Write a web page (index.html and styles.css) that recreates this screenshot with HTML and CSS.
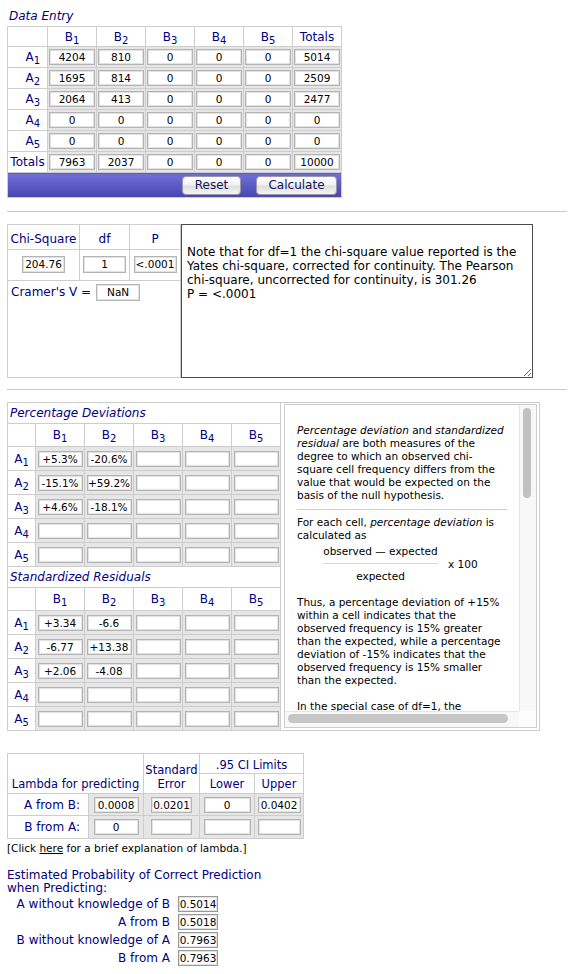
FILE: index.html
```html
<!DOCTYPE html>
<html>
<head>
<meta charset="utf-8">
<title>Chi-Square</title>
<link rel="stylesheet" href="styles.css">
</head>
<body>
<div class="title">Data Entry</div>
<table class="grid data">
  <colgroup><col class="w40"><col class="w49"><col class="w49"><col class="w49"><col class="w49"><col class="w49"><col class="w49"></colgroup>
  <tr class="hrow"><th></th><th>B<sub>1</sub></th><th>B<sub>2</sub></th><th>B<sub>3</sub></th><th>B<sub>4</sub></th><th>B<sub>5</sub></th><th>Totals</th></tr>
  <tr><th class="alab">A<sub>1</sub></th><td><input value="4204"></td><td><input value="810"></td><td><input value="0"></td><td><input value="0"></td><td><input value="0"></td><td><input value="5014"></td></tr>
  <tr><th class="alab">A<sub>2</sub></th><td><input value="1695"></td><td><input value="814"></td><td><input value="0"></td><td><input value="0"></td><td><input value="0"></td><td><input value="2509"></td></tr>
  <tr><th class="alab">A<sub>3</sub></th><td><input value="2064"></td><td><input value="413"></td><td><input value="0"></td><td><input value="0"></td><td><input value="0"></td><td><input value="2477"></td></tr>
  <tr><th class="alab">A<sub>4</sub></th><td><input value="0"></td><td><input value="0"></td><td><input value="0"></td><td><input value="0"></td><td><input value="0"></td><td><input value="0"></td></tr>
  <tr><th class="alab">A<sub>5</sub></th><td><input value="0"></td><td><input value="0"></td><td><input value="0"></td><td><input value="0"></td><td><input value="0"></td><td><input value="0"></td></tr>
  <tr><th class="tlab">Totals</th><td><input value="7963"></td><td><input value="2037"></td><td><input value="0"></td><td><input value="0"></td><td><input value="0"></td><td><input value="10000"></td></tr>
  <tr class="bar"><td colspan="7"><button class="btn reset">Reset</button><button class="btn calc">Calculate</button></td></tr>
</table>

<div class="rule"></div>

<div class="chirow">
  <table class="grid chi">
    <colgroup><col class="c72"><col class="c50"><col class="c51"></colgroup>
    <tr class="chead"><th>Chi-Square</th><th>df</th><th>P</th></tr>
    <tr class="cvals"><th><input class="cin" value="204.76"></th><th><input class="cin" value="1"></th><th><input class="cin" value="&lt;.0001"></th></tr>
    <tr class="cram"><th colspan="3"><div class="cramer"><span>Cramer's V =</span><input class="cin" value="NaN"></div></th></tr>
  </table>
  <textarea class="note">

Note that for df=1 the chi-square value reported is the Yates chi-square, corrected for continuity. The Pearson chi-square, uncorrected for continuity, is 301.26
P = &lt;.0001</textarea>
</div>

<div class="rule rule2"></div>

<div class="pct">
  <table class="grid res">
    <colgroup><col class="w28"><col class="w49"><col class="w49"><col class="w49"><col class="w49"><col class="w49"></colgroup>
    <tr class="cap"><th colspan="6">Percentage Deviations</th></tr>
    <tr class="rh"><th></th><th>B<sub>1</sub></th><th>B<sub>2</sub></th><th>B<sub>3</sub></th><th>B<sub>4</sub></th><th>B<sub>5</sub></th></tr>
    <tr class="rr"><th>A<sub>1</sub></th><td><input value="+5.3%"></td><td><input value="-20.6%"></td><td><input></td><td><input></td><td><input></td></tr>
    <tr class="rr"><th>A<sub>2</sub></th><td><input value="-15.1%"></td><td><input value="+59.2%"></td><td><input></td><td><input></td><td><input></td></tr>
    <tr class="rr"><th>A<sub>3</sub></th><td><input value="+4.6%"></td><td><input value="-18.1%"></td><td><input></td><td><input></td><td><input></td></tr>
    <tr class="rr"><th>A<sub>4</sub></th><td><input></td><td><input></td><td><input></td><td><input></td><td><input></td></tr>
    <tr class="rr"><th>A<sub>5</sub></th><td><input></td><td><input></td><td><input></td><td><input></td><td><input></td></tr>
    <tr class="cap"><th colspan="6">Standardized Residuals</th></tr>
    <tr class="rh"><th></th><th>B<sub>1</sub></th><th>B<sub>2</sub></th><th>B<sub>3</sub></th><th>B<sub>4</sub></th><th>B<sub>5</sub></th></tr>
    <tr class="rr"><th>A<sub>1</sub></th><td><input value="+3.34"></td><td><input value="-6.6"></td><td><input></td><td><input></td><td><input></td></tr>
    <tr class="rr"><th>A<sub>2</sub></th><td><input value="-6.77"></td><td><input value="+13.38"></td><td><input></td><td><input></td><td><input></td></tr>
    <tr class="rr"><th>A<sub>3</sub></th><td><input value="+2.06"></td><td><input value="-4.08"></td><td><input></td><td><input></td><td><input></td></tr>
    <tr class="rr"><th>A<sub>4</sub></th><td><input></td><td><input></td><td><input></td><td><input></td><td><input></td></tr>
    <tr class="rr"><th>A<sub>5</sub></th><td><input></td><td><input></td><td><input></td><td><input></td><td><input></td></tr>
  </table>
  <div class="side">
    <div class="panel">
      <div class="pview">
        <div class="panel-in">
          <p class="first"><i>Percentage deviation</i> and <i>standardized residual</i> are both measures of the degree to which an observed chi-square cell frequency differs from the value that would be expected on the basis of the null hypothesis.</p>
          <hr class="sep">
          <p>For each cell, <i>percentage deviation</i> is calculated as</p>
          <div class="frac">
            <div class="fr"><div class="num">observed — expected</div><div class="den">expected</div></div>
            <div class="x100">x 100</div>
          </div>
          <p class="gap">Thus, a percentage deviation of +15% within a cell indicates that the observed frequency is 15% greater than the expected, while a percentage deviation of -15% indicates that the observed frequency is 15% smaller than the expected.</p>
          <p class="gap">In the special case of df=1, the percentage deviations are calculated from the observed frequencies as adjusted by the Yates correction for continuity.</p>
        </div>
      </div>
      <div class="vbar"><div class="vthumb"></div></div>
      <div class="hbar"><div class="hthumb"></div></div>
      <div class="corner"></div>
    </div>
  </div>
</div>

<table class="grid lam">
  <colgroup><col class="l81"><col class="l55"><col class="l56"><col class="l55"><col class="l49"></colgroup>
  <tr class="lh1"><th colspan="2" rowspan="2" class="lamhead">Lambda for predicting</th><th rowspan="2" class="se">Standard<br>Error</th><th colspan="2" class="ci">.95 CI Limits</th></tr>
  <tr class="lh2"><th>Lower</th><th>Upper</th></tr>
  <tr class="lr1"><th class="rlab">A from B:</th><td><input class="i45" value="0.0008"></td><td><input class="i41" value="0.0201"></td><td><input class="i47" value="0"></td><td><input class="i43" value="0.0402"></td></tr>
  <tr class="lr2"><th class="rlab">B from A:</th><td><input class="i45" value="0"></td><td><input class="i41"></td><td><input class="i47"></td><td><input class="i43"></td></tr>
</table>
<div class="click">[Click <a href="#">here</a> for a brief explanation of lambda.]</div>

<div class="est">Estimated Probability of Correct Prediction<br>when Predicting:</div>
<table class="prob">
  <tr><td class="pl">A without knowledge of B</td><td><input class="pin" value="0.5014"></td></tr>
  <tr><td class="pl">A from B</td><td><input class="pin" value="0.5018"></td></tr>
  <tr><td class="pl">B without knowledge of A</td><td><input class="pin" value="0.7963"></td></tr>
  <tr><td class="pl">B from A</td><td><input class="pin" value="0.7963"></td></tr>
</table>
</body>
</html>
```

FILE: styles.css
```css
* { box-sizing: border-box; }
html, body { margin: 0; padding: 0; background: #fff; }
body {
  padding-left: 7px;
  font-family: "DejaVu Sans", Verdana, sans-serif;
  font-size: 12px;
  line-height: 14px;
  color: #000;
}
sub { font-size: 10px; vertical-align: -3px; line-height: 0; }

.title { font-style: italic; color: #000080; height: 26px; padding: 9px 0 0 2px; }

.grid { border-collapse: collapse; table-layout: fixed; }
.grid th, .grid td {
  border: 1px solid #cdcdcd;
  padding: 0;
  font-weight: normal;
  color: #000080;
  text-align: center;
  vertical-align: middle;
  background: #fff;
}
.grid td { background: #e6e6e6; }

input {
  display: block;
  margin: 0 auto;
  width: 46px;
  height: 16px;
  padding: 0;
  border: 1px solid #b4b4b4;
  box-shadow: inset 0 0 0 1px #e2e2e2;
  background: #fff;
  font-family: "DejaVu Sans", Verdana, sans-serif;
  font-size: 10.5px;
  color: #000;
  text-align: center;
  outline: none;
}

/* data entry */
.data { width: 335px; }
.w40 { width: 40px; }
.w49 { width: 49px; }
.w28 { width: 28px; }
.data .hrow th { height: 20px; }
.data tr th, .data tr td { height: 21px; }
.data .alab { text-align: right; padding-right: 7px; }
.data .tlab { text-align: center; }
.data .bar td {
  height: 25px;
  background: linear-gradient(#7070d8, #4646ae);
  text-align: right;
  padding-right: 4px;
}
.btn {
  height: 19px;
  margin-left: 15px;
  padding: 0;
  font-family: "DejaVu Sans", Verdana, sans-serif;
  font-size: 12px;
  color: #15155e;
  background: linear-gradient(#ffffff, #f2f2f2 45%, #dedede 55%, #f4f4f4);
  border: 1px solid #9898aa;
  border-radius: 4px;
  vertical-align: middle;
}
.reset { width: 59px; }
.calc { width: 81px; }

.rule { width: 560px; height: 0; border-top: 1px solid #c8c8c8; margin: 13px 0 12px; }
.rule2 { margin: 11px 0 12px; }

/* chi square */
.chirow { display: flex; align-items: stretch; height: 154px; }
.chi { width: 173px; height: 154px; }
.c72 { width: 72px; }
.c50 { width: 50px; }
.c51 { width: 51px; }
.chi .chead th { height: 25px; vertical-align: bottom; padding-bottom: 3px; }
.chi .cvals th { height: 31px; padding-bottom: 2px; }
.chi .cram th { vertical-align: top; text-align: left; }
.cramer { display: flex; align-items: center; gap: 5px; height: 22px; padding-left: 3px; }
.cin { width: 43px; height: 17px; margin: 0 auto; }
.cramer .cin { margin: 0; width: 44px; }
.note {
  width: 352px;
  height: 154px;
  margin: 0;
  border: 1px solid #4c4c4c;
  padding: 6px 4px 2px 5px;
  font-family: "DejaVu Sans", Verdana, sans-serif;
  font-size: 12px;
  line-height: 14px;
  color: #000;
  resize: both;
  background: #fff;
}

/* residuals */
.pct { display: flex; height: 329px; }
.res { width: 273px; align-self: flex-start; }
.res .cap th { height: 21px; text-align: left; font-style: italic; padding-left: 2px; }
.res .rh th { height: 23px; }
.res .rr th, .res .rr td { height: 24px; }
.res input { width: 45px; }

.side {
  width: 259px;
  border: 1px solid #cdcdcd;
  border-left: none;
  padding: 1px 2px 2px 3px;
}
.panel {
  height: 100%;
  border: 1px solid #cdcdcd;
  display: grid;
  grid-template-columns: 1fr 17px;
  grid-template-rows: 1fr 16px;
  font-size: 10.5px;
  line-height: 13px;
  color: #000;
}
.pview { overflow: hidden; }
.panel-in { width: 250px; padding: 19px 12px 20px 12px; }
.panel-in p { margin: 0; width: 210px; }
.panel-in .gap { margin-top: 13px; }
.sep { border: none; border-top: 1px solid #cfcfcf; margin: 7px 0 6px; height: 0; width: 210px; }
.frac { display: flex; align-items: center; margin: 3px 0 0 26px; white-space: nowrap; }
.fr { width: 115px; text-align: center; }
.num { padding-bottom: 5px; border-bottom: 1px solid #d8d8d8; }
.den { padding-top: 6px; }
.x100 { margin-left: 10px; }

.vbar { background: #f8f8f8; border-left: 1px solid #e6e6e6; padding: 3px 5px 0 3px; }
.vthumb { width: 8px; height: 90px; border-radius: 4px; background: #c2c2c2; }
.hbar { background: #f8f8f8; border-top: 1px solid #e6e6e6; padding: 2px 0 0 3px; }
.hthumb { width: 220px; height: 9px; border-radius: 5px; background: #c6c6c6; }
.corner { background: #fdfdfd; }

/* lambda */
.lam { width: 296px; margin-top: 22px; }
.l81 { width: 81px; }
.l55 { width: 55px; }
.l56 { width: 56px; }
.l49 { width: 49px; }
.lam th { font-size: 11.5px; }
.lam .lh1 th { height: 20px; }
.lam .lh1 .ci { padding-top: 3px; }
.lam .lh2 th { height: 20px; }
.lam .lamhead { vertical-align: bottom; padding-bottom: 2px; }
.lam .se { vertical-align: bottom; padding-bottom: 2px; }
.lam .lr1 th, .lam .lr1 td { height: 22px; }
.lam .lr2 th, .lam .lr2 td { height: 23px; }
.lam .rlab { text-align: right; padding-right: 8px; font-size: 12px; }
.i45 { width: 45px; }
.i41 { width: 41px; }
.i47 { width: 47px; }
.i43 { width: 43px; }

.click { margin-top: 2px; font-size: 10.5px; line-height: 14px; color: #000; }
.click a { color: #000; text-decoration: underline; }

.est { margin-top: 14px; line-height: 13px; color: #000080; }
.prob { border-collapse: separate; border-spacing: 0 2px; margin: -1px 0 0 9px; }
.prob td { padding: 0; height: 16px; }
.prob .pl { width: 162px; text-align: right; padding-right: 8px; color: #000080; }
.pin { width: 40px; height: 16px; margin: 0; border-color: #999; }
```
